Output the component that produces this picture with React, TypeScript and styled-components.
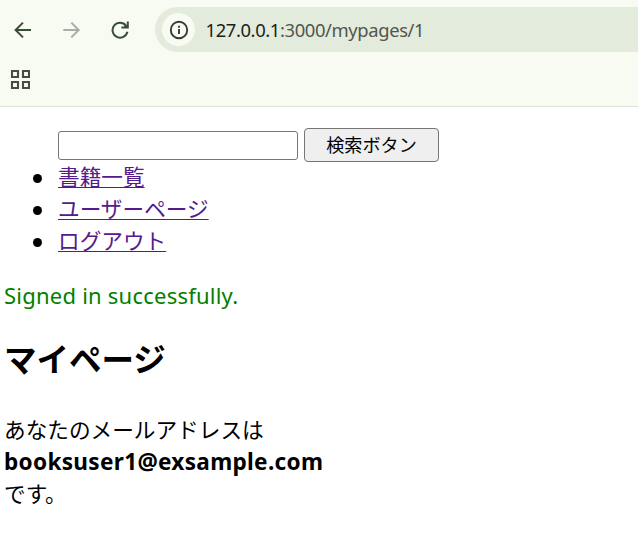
import React from "react";
import styled, { createGlobalStyle } from "styled-components";

const GlobalStyle = createGlobalStyle`
  * { box-sizing: border-box; }
  body {
    margin: 0;
    background: #fff;
    color: #000;
    font-family: "Noto Sans", "Noto Sans CJK JP", sans-serif;
    font-size: 21.65px;
    overflow: hidden;
  }
`;

const Chrome = styled.header`
  height: 107px;
  background: #f8fbf1;
  border-bottom: 1px solid #dde1d8;
`;

const Toolbar = styled.div`
  display: flex;
  align-items: center;
  height: 59px;
  padding-left: 11px;
`;

const NavButton = styled.span<{ $disabled?: boolean }>`
  display: flex;
  justify-content: center;
  width: 24px;
  margin-right: 24.5px;
  color: ${(p) => (p.$disabled ? "#a9ada5" : "#3a4d38")};
`;

const AddressBar = styled.div`
  display: flex;
  align-items: center;
  flex: 1;
  height: 45px;
  margin-left: -1.5px;
  padding-left: 7px;
  border-radius: 23px 0 0 23px;
  background: #e3ebdc;
`;

const SiteInfo = styled.span`
  display: flex;
  align-items: center;
  justify-content: center;
  width: 33px;
  height: 33px;
  border-radius: 50%;
  background: #f8fbf1;
`;

const Url = styled.span`
  margin-left: 10.5px;
  font-size: 18.4px;
  letter-spacing: -0.38px;
  line-height: 28px;
  color: #51564e;
  white-space: nowrap;
`;

const Host = styled.span`
  color: #1c1e1a;
`;

const Bookmarks = styled.div`
  display: flex;
  align-items: center;
  height: 40px;
  padding-left: 10px;
`;

const Page = styled.main`
  padding: 21px 4px 0;
`;

const Menu = styled.ul`
  margin: 0;
  padding: 0 0 0 54px;
  list-style: none;
`;

const SearchForm = styled.form`
  display: flex;
  align-items: center;
  gap: 6px;
  height: 34px;
`;

const SearchInput = styled.input`
  width: 240px;
  height: 29px;
  margin: 0;
  padding: 1px 3px;
  border: 1px solid #767676;
  border-radius: 3px;
  background: #fff;
  font: inherit;
  font-size: 18px;
`;

const SearchButton = styled.button`
  width: 135px;
  height: 34px;
  padding: 0;
  border: 1px solid #767676;
  border-radius: 4px;
  background: #efefef;
  color: #000;
  font-family: inherit;
  font-size: 18.1px;
  line-height: 28px;
`;

const MenuItem = styled.li`
  display: flex;
  align-items: center;
  height: 32.2px;
  margin-left: -25px;

  &::before {
    content: "";
    width: 9px;
    height: 9px;
    margin-right: 16px;
    border-radius: 50%;
    background: #000;
  }
`;

const MenuLink = styled.a`
  padding-bottom: 2px;
  color: #551a8b;
  line-height: 30px;
  text-decoration: underline;
  text-decoration-thickness: 1.4px;
  text-underline-offset: 2px;
`;

const Notice = styled.p`
  margin: 20px 0 0;
  color: #008000;
  font-size: 22px;
  letter-spacing: 0.23px;
  line-height: 32px;
  white-space: nowrap;
`;

const Title = styled.h2`
  margin: 25px 0 0;
  font-size: 32.5px;
  line-height: 48px;
`;

const Message = styled.p`
  margin: 30px 0 0;
  line-height: 32.2px;
  white-space: nowrap;
`;

const Email = styled.strong`
  display: block;
  font-size: 22.6px;
  letter-spacing: 0.3px;
`;

const links = ["書籍一覧", "ユーザーページ", "ログアウト"];

const BackIcon = () => (
  <svg width="18" height="18" viewBox="0 0 18 18" fill="none" stroke="currentColor" strokeWidth="2">
    <path d="M17 9H2.5M9 1.6 1.6 9 9 16.4" />
  </svg>
);

const ForwardIcon = () => (
  <svg width="18" height="18" viewBox="0 0 18 18" fill="none" stroke="currentColor" strokeWidth="2">
    <path d="M.3 9h14.5M8.3 1.6 15.7 9l-7.4 7.4" />
  </svg>
);

const ReloadIcon = () => (
  <svg width="18" height="18" viewBox="0 0 18 18" fill="none" stroke="currentColor" strokeWidth="2">
    <path d="M16.4 10.8A7.5 7.5 0 1 1 15 4.6L16.4 6.2" />
    <path d="M10.4 6.6H16.8V.6" />
    <path d="M14 3.5 16.8 6.6H13z" fill="currentColor" stroke="none" />
  </svg>
);

const InfoIcon = () => (
  <svg width="20" height="20" viewBox="0 0 20 20" fill="none" stroke="#363a34" strokeWidth="1.9">
    <circle cx="10" cy="10" r="8.2" />
    <path d="M10 9v5M10 5.8v1.9" />
  </svg>
);

const AppsIcon = () => (
  <svg width="20" height="20" viewBox="0 0 20 20" fill="none" stroke="#484d44" strokeWidth="2.1">
    <path d="M2 2h6v6H2zM13 2h6v6h-6zM2 13h6v6H2zM13 13h6v6h-6z" />
  </svg>
);

export default function App() {
  return (
    <>
      <GlobalStyle />
      <Chrome>
        <Toolbar>
          <NavButton><BackIcon /></NavButton>
          <NavButton $disabled><ForwardIcon /></NavButton>
          <NavButton><ReloadIcon /></NavButton>
          <AddressBar>
            <SiteInfo><InfoIcon /></SiteInfo>
            <Url><Host>127.0.0.1</Host>:3000/mypages/1</Url>
          </AddressBar>
        </Toolbar>
        <Bookmarks><AppsIcon /></Bookmarks>
      </Chrome>
      <Page>
        <Menu>
          <SearchForm>
            <SearchInput aria-label="検索" />
            <SearchButton type="button">検索ボタン</SearchButton>
          </SearchForm>
          {links.map((label) => (
            <MenuItem key={label}><MenuLink href="#">{label}</MenuLink></MenuItem>
          ))}
        </Menu>
        <Notice>Signed in successfully.</Notice>
        <Title>マイページ</Title>
        <Message>
          あなたのメールアドレスは
          <Email>booksuser1@exsample.com</Email>
          です。
        </Message>
      </Page>
    </>
  );
}
